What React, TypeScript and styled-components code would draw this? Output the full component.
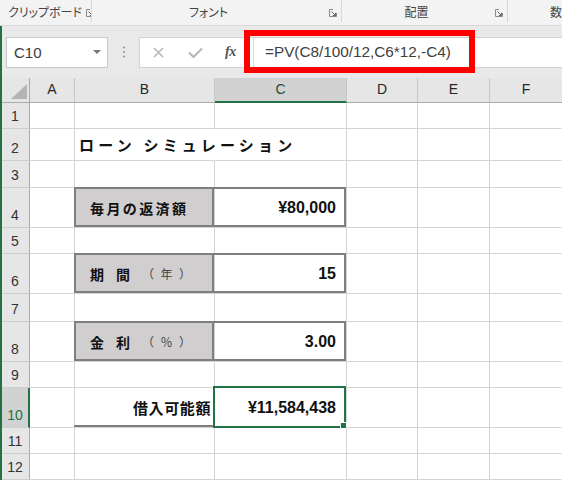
import React from "react";
import styled, { createGlobalStyle, css } from "styled-components";

const GREEN = "#217346";
const GRID = "#d4d4d4";
const FILL = "#d0cece";
const FRAME = "#7f7f7f";
const JP = `"Noto Sans CJK JP", "Noto Sans", sans-serif`;
const LAT = `"Liberation Sans", Arial, sans-serif`;

const GlobalStyle = createGlobalStyle`
  html, body { margin: 0; padding: 0; background: #fff; }
  body { font-family: ${JP}; overflow: hidden; }
`;

const Window = styled.div`
  width: 562px;
  height: 480px;
  overflow: hidden;
  display: flex;
  flex-direction: column;
  background: #fff;
`;

/* ---------- Ribbon ---------- */
const Ribbon = styled.div`
  flex: none;
  height: 26px;
  display: flex;
  align-items: flex-start;
  background: #f3f3f3;
  border-bottom: 1px solid #dadada;
  box-sizing: border-box;
  overflow: hidden;
`;

const Group = styled.div<{ $w?: number; $last?: boolean }>`
  flex: ${(p) => (p.$w ? `0 0 ${p.$w}px` : "1 1 auto")};
  height: 22px;
  display: flex;
  align-items: flex-end;
  box-sizing: border-box;
  border-right: ${(p) => (p.$last ? "none" : "1px solid #d6d6d6")};
  padding-bottom: 3px;
  overflow: hidden;
`;

const GroupLabel = styled.span<{ $align: "left" | "center"; $indent?: number }>`
  flex: 1;
  text-align: ${(p) => p.$align};
  padding-left: ${(p) => p.$indent ?? 0}px;
  font-size: 12px;
  line-height: 14px;
  color: #444;
  font-feature-settings: "palt";
  white-space: nowrap;
`;

const LauncherSvg = styled.svg`
  flex: none;
  width: 8px;
  height: 8px;
  margin: 0 4px 2px 4px;
`;

const Launcher = () => (
  <LauncherSvg viewBox="0 0 8 8">
    <path d="M0.5 7.5 V0.5 H4 M0.5 7.5 H7.5 V4" fill="none" stroke="#8a8a8a" strokeWidth="1" />
    <path d="M2.5 2.5 L6.5 6.5 M6.5 3.8 V6.5 H3.8" fill="none" stroke="#6a6a6a" strokeWidth="1" />
  </LauncherSvg>
);

/* ---------- Formula bar ---------- */
const FormulaBar = styled.div`
  flex: none;
  height: 52px;
  position: relative;
  display: flex;
  align-items: center;
  background: #e9e9e9;
  border-left: 2px solid ${GREEN};
  box-sizing: border-box;
  padding-left: 4px;
`;

const NameBox = styled.div`
  flex: none;
  width: 102px;
  height: 31px;
  box-sizing: border-box;
  background: #fff;
  border: 1px solid #c9c9c9;
  display: flex;
  align-items: center;
  justify-content: space-between;
  padding: 0 6px 0 7px;
  font: 400 15px ${LAT};
  color: #3a3a3a;
`;

const DropArrow = styled.span`
  width: 0;
  height: 0;
  border-left: 4px solid transparent;
  border-right: 4px solid transparent;
  border-top: 4px solid #7a7a7a;
`;

const GripSvg = styled.svg`
  flex: none;
  width: 4px;
  height: 12px;
  margin: 0 13px 0 14px;
`;

const FormulaBox = styled.div`
  flex: 1;
  height: 31px;
  display: flex;
  background: #fff;
  border: 1px solid #d2d2d2;
  border-right: none;
  box-sizing: border-box;
`;

const Commands = styled.div`
  flex: none;
  width: 113px;
  display: flex;
  align-items: center;
  padding-left: 13px;
  box-sizing: border-box;
`;

const CmdSvg = styled.svg<{ $gap: number }>`
  flex: none;
  margin-right: ${(p) => p.$gap}px;
`;

const Fx = styled.span`
  font: italic 700 14px "Liberation Serif", "DejaVu Serif", serif;
  color: #555;
  letter-spacing: -0.5px;
`;

const FormulaInput = styled.div`
  flex: 1;
  display: flex;
  align-items: center;
  border-left: 1px solid #d9d9d9;
  padding-left: 11px;
  font: 400 15.3px ${LAT};
  color: #404040;
  white-space: nowrap;
`;

const Highlight = styled.div`
  position: absolute;
  left: 242px;
  top: 4px;
  width: 231px;
  height: 43px;
  box-sizing: border-box;
  border: 6px solid #ff0000;
  pointer-events: none;
`;

/* ---------- Sheet ---------- */
const ROW_HEIGHTS = [25, 26, 32, 27, 40, 26, 40, 28, 40, 26, 40, 26, 26];

const Sheet = styled.div`
  flex: 1;
  display: grid;
  border-left: 2px solid ${GREEN};
  grid-template-columns: 28px 45px 140px 132px 71px 72px 1fr;
  grid-template-rows: ${ROW_HEIGHTS.map((h) => `${h}px`).join(" ")};
  background: #fff;
`;

const Corner = styled.div`
  background: #e6e6e6;
  border-right: 1px solid #ababab;
  border-bottom: 1px solid #ababab;
  box-sizing: border-box;
  display: flex;
  align-items: flex-end;
  justify-content: flex-end;
  padding: 0 2px 3px 0;
`;

const ColHead = styled.div<{ $sel?: boolean; $last?: boolean }>`
  background: ${(p) => (p.$sel ? "#d2d2d2" : "#e6e6e6")};
  border-right: ${(p) => (p.$last ? "none" : "1px solid #c6c6c6")};
  border-bottom: ${(p) => (p.$sel ? `2px solid ${GREEN}` : "1px solid #ababab")};
  box-sizing: border-box;
  display: flex;
  align-items: center;
  justify-content: center;
  padding-bottom: ${(p) => (p.$sel ? 1 : 2)}px;
  font: 400 14px ${LAT};
  color: ${(p) => (p.$sel ? "#1e4e35" : "#262626")};
`;

const RowHead = styled.div<{ $sel?: boolean }>`
  background: ${(p) => (p.$sel ? "#d2d2d2" : "#e6e6e6")};
  border-right: ${(p) => (p.$sel ? `2px solid ${GREEN}` : "1px solid #ababab")};
  border-bottom: 1px solid #cfcfcf;
  box-sizing: border-box;
  display: flex;
  align-items: flex-end;
  justify-content: center;
  padding: 0 ${(p) => (p.$sel ? 0 : 1)}px 4px 0;
  font: 400 14px/16px ${LAT};
  color: ${(p) => (p.$sel ? GREEN : "#333")};
`;

type Align = "left" | "right";

const Cell = styled.div<{
  $align?: Align;
  $bg?: string;
  $frame?: string;
  $pl?: number;
  $pr?: number;
  $noRight?: boolean;
  $last?: boolean;
}>`
  position: relative;
  display: flex;
  align-items: center;
  justify-content: ${(p) => (p.$align === "right" ? "flex-end" : "flex-start")};
  background: ${(p) => p.$bg ?? "transparent"};
  border-right: ${(p) => (p.$noRight || p.$last ? "1px solid transparent" : `1px solid ${GRID}`)};
  border-bottom: 1px solid ${GRID};
  box-sizing: border-box;
  padding: 0 ${(p) => p.$pr ?? 0}px 0 ${(p) => p.$pl ?? 0}px;
  min-width: 0;
  white-space: nowrap;
  ${(p) =>
    p.$frame &&
    css`
      &::after {
        content: "";
        position: absolute;
        top: -1px;
        left: -1px;
        right: 0;
        bottom: 0;
        border-style: solid;
        border-color: ${FRAME};
        border-width: ${p.$frame};
        pointer-events: none;
      }
    `}
`;

const Selection = styled.div`
  position: absolute;
  top: -2px;
  left: -2px;
  right: 0;
  bottom: -1px;
  border: 2px solid ${GREEN};
  pointer-events: none;
`;

const FillHandle = styled.div`
  position: absolute;
  right: -3px;
  bottom: -3px;
  width: 5px;
  height: 5px;
  background: ${GREEN};
  border: 1px solid #fff;
`;

const Title = styled.span`
  font: 700 15px ${JP};
  letter-spacing: 4.2px;
  color: #111;
`;

const Label = styled.span<{ $spacing?: number }>`
  font: 700 14px ${JP};
  letter-spacing: ${(p) => p.$spacing ?? 2.4}px;
  color: #111;
`;

const LabelSub = styled.span`
  font: 400 12px ${JP};
  letter-spacing: 6.5px;
  color: #444;
`;

const Caption = styled.span`
  font: 700 15px ${JP};
  letter-spacing: 0.6px;
  color: #111;
`;

const Value = styled.span`
  font: 700 16px ${LAT};
  color: #111;
`;

type CellSpec = {
  content?: React.ReactNode;
  align?: Align;
  bg?: string;
  frame?: string;
  pl?: number;
  pr?: number;
  noRight?: boolean;
  selected?: boolean;
};

const COLS = ["A", "B", "C", "D", "E", "F"];
const SELECTED_COL = "C";
const SELECTED_ROW = 10;

const DATA: Record<number, Partial<Record<string, CellSpec>>> = {
  2: {
    B: { content: <Title>ローン シミュレーション</Title>, pl: 4, noRight: true },
  },
  4: {
    B: { content: <Label>毎月の返済額</Label>, bg: FILL, frame: "2px", pl: 15 },
    C: { content: <Value>¥80,000</Value>, align: "right", pr: 10, frame: "2px 2px 2px 0" },
  },
  6: {
    B: {
      content: (
        <>
          <Label $spacing={12}>期間</Label>
          <LabelSub>（年）</LabelSub>
        </>
      ),
      bg: FILL,
      frame: "2px",
      pl: 15,
    },
    C: { content: <Value>15</Value>, align: "right", pr: 10, frame: "2px 2px 2px 0" },
  },
  8: {
    B: {
      content: (
        <>
          <Label $spacing={12}>金利</Label>
          <LabelSub>（％）</LabelSub>
        </>
      ),
      bg: FILL,
      frame: "2px",
      pl: 15,
    },
    C: { content: <Value>3.00</Value>, align: "right", pr: 10, frame: "2px 2px 2px 0" },
  },
  10: {
    B: { content: <Caption>借入可能額</Caption>, align: "right", pr: 3, frame: "0 0 2px 0" },
    C: { content: <Value>¥11,584,438</Value>, align: "right", pr: 10, selected: true },
  },
};

const Triangle = () => (
  <svg width="16" height="15" viewBox="0 0 16 15">
    <polygon points="16,0 16,15 0,15" fill="#b4b4b4" />
  </svg>
);

export default function App() {
  const rows = ROW_HEIGHTS.slice(1).map((_, i) => i + 1);
  return (
    <Window>
      <GlobalStyle />
      <Ribbon>
        <Group $w={92}>
          <GroupLabel $align="left" $indent={8}>クリップボード</GroupLabel>
          <Launcher />
        </Group>
        <Group $w={250}>
          <GroupLabel $align="center">フォント</GroupLabel>
          <Launcher />
        </Group>
        <Group $w={166}>
          <GroupLabel $align="center">配置</GroupLabel>
          <Launcher />
        </Group>
        <Group $last>
          <GroupLabel $align="left" $indent={42}>数</GroupLabel>
        </Group>
      </Ribbon>

      <FormulaBar>
        <NameBox>
          <span>C10</span>
          <DropArrow />
        </NameBox>
        <GripSvg viewBox="0 0 4 12">
          <circle cx="2" cy="1.5" r="1.1" fill="#9a9a9a" />
          <circle cx="2" cy="6" r="1.1" fill="#9a9a9a" />
          <circle cx="2" cy="10.5" r="1.1" fill="#9a9a9a" />
        </GripSvg>
        <FormulaBox>
          <Commands>
            <CmdSvg $gap={24} width="11" height="11" viewBox="0 0 11 11">
              <path d="M1 1 L10 10 M10 1 L1 10" stroke="#b5b5b5" strokeWidth="1.5" fill="none" />
            </CmdSvg>
            <CmdSvg $gap={22} width="15" height="11" viewBox="0 0 15 11">
              <path d="M1 5.5 L5.5 10 L14 1.5" stroke="#b5b5b5" strokeWidth="2" fill="none" />
            </CmdSvg>
            <Fx>fx</Fx>
          </Commands>
          <FormulaInput>=PV(C8/100/12,C6*12,-C4)</FormulaInput>
        </FormulaBox>
        <Highlight />
      </FormulaBar>

      <Sheet>
        <Corner>
          <Triangle />
        </Corner>
        {COLS.map((c, i) => (
          <ColHead key={c} $sel={c === SELECTED_COL} $last={i === COLS.length - 1}>
            {c}
          </ColHead>
        ))}
        {rows.map((r) => (
          <React.Fragment key={r}>
            <RowHead $sel={r === SELECTED_ROW}>{r}</RowHead>
            {COLS.map((c, i) => {
              const spec = DATA[r]?.[c];
              return (
                <Cell
                  key={c}
                  $align={spec?.align}
                  $bg={spec?.bg}
                  $frame={spec?.frame}
                  $pl={spec?.pl}
                  $pr={spec?.pr}
                  $noRight={spec?.noRight}
                  $last={i === COLS.length - 1}
                >
                  {spec?.content}
                  {spec?.selected && (
                    <Selection>
                      <FillHandle />
                    </Selection>
                  )}
                </Cell>
              );
            })}
          </React.Fragment>
        ))}
      </Sheet>
    </Window>
  );
}
